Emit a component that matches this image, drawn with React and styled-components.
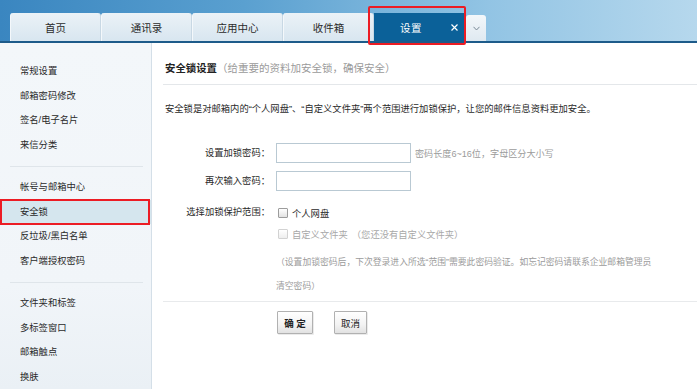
import React from "react";
import styled, { createGlobalStyle } from "styled-components";

const GlobalStyle = createGlobalStyle`
  html, body {
    margin: 0;
    padding: 0;
    background: #ffffff;
  }
  body {
    font-family: "Liberation Sans", "Noto Sans CJK SC", sans-serif;
    color: #333333;
  }
  * {
    box-sizing: border-box;
  }
`;

const Page = styled.div`
  width: 697px;
  height: 389px;
  overflow: hidden;
  display: flex;
  flex-direction: column;
  background: #ffffff;
`;

const Header = styled.div`
  height: 43px;
  flex-shrink: 0;
  display: flex;
  align-items: flex-end;
  padding-left: 10px;
  background: linear-gradient(90deg, #3a86c0 0%, #5aa0d0 35%, #92c4e4 70%, #b6d8ed 100%);
  border-bottom: 2px solid #1d5b8a;
  position: relative;
  z-index: 2;
`;

const Tab = styled.div`
  width: 91px;
  height: 28px;
  display: flex;
  align-items: center;
  justify-content: center;
  font-size: 10.5px;
  color: #2b2b2b;
  background: linear-gradient(180deg, #ebf2f7 0%, #d8e6f0 100%);
  border-right: 1px solid #c8d8e4;
  border-left: 1px solid #f4f8fb;
  border-radius: 3px 3px 0 0;
`;

const ActiveTab = styled.div`
  position: relative;
  width: 91px;
  height: 28px;
  display: flex;
  align-items: center;
  padding-left: 26px;
  font-size: 10.5px;
  color: #ffffff;
  background: #0b6199;
  margin-right: 1px;

  &::after {
    content: "";
    position: absolute;
    top: -7px;
    left: -6px;
    right: -1px;
    bottom: -4px;
    border: 2px solid #ec1c24;
    border-radius: 2px;
  }
`;

const TabLabel = styled.span`
  letter-spacing: 0.5px;
`;

const CloseMark = styled.svg`
  position: absolute;
  right: 7px;
  top: 11px;
`;

const MoreTab = styled.div`
  width: 20px;
  height: 26px;
  display: flex;
  align-items: center;
  justify-content: center;
  background: linear-gradient(180deg, #f3f7fa 0%, #dfe9f1 100%);
  border-radius: 3px 3px 0 0;
`;

const Body = styled.div`
  flex: 1;
  display: flex;
  min-height: 0;
`;

const Sidebar = styled.div`
  width: 152px;
  flex-shrink: 0;
  padding-top: 16px;
  border-right: 1px solid #d4dfe8;
  background: linear-gradient(180deg, #f3f7fa 0%, #f1f5f9 70%, #eaf0f5 100%);
`;

const NavGroup = styled.div`
  display: flex;
  flex-direction: column;
`;

const NavItem = styled.div`
  position: relative;
  height: 24.5px;
  line-height: 24.5px;
  padding-left: 20px;
  font-size: 9.3px;
  color: #2a2a2a;
  background: ${(p) => (p.$active ? "#d5e6ee" : "transparent")};

  ${(p) =>
    p.$active &&
    `
    &::after {
      content: "";
      position: absolute;
      top: -1px;
      left: 0;
      right: 1px;
      bottom: -1px;
      border: 2px solid #ec1c24;
    }
  `}
`;

const NavRule = styled.div`
  height: 1px;
  margin: 9px 8px 8px 10px;
  background: #dfe5ea;
`;

const Main = styled.div`
  flex: 1;
  padding-left: 11px;
  display: flex;
  flex-direction: column;
`;

const TitleRow = styled.div`
  padding: 18px 0 8px 2px;
  line-height: 14px;
  border-bottom: 1px solid #e4e7ea;
  display: flex;
  align-items: baseline;
`;

const Title = styled.span`
  font-size: 10.4px;
  font-weight: bold;
  color: #222222;
`;

const SubTitle = styled.span`
  font-size: 10.5px;
  color: #9a9a9a;
`;

const Description = styled.p`
  margin: 16px 0 0 2px;
  line-height: 16px;
  font-size: 9.3px;
  color: #2a2a2a;
`;

const Form = styled.div`
  margin-top: 26px;
  display: grid;
  grid-template-columns: 107px 1fr;
  column-gap: 6px;
  align-items: center;
`;

const Label = styled.div`
  text-align: right;
  font-size: 9.3px;
  color: #2a2a2a;
  line-height: ${(p) => p.$h || 20}px;
  margin-top: ${(p) => p.$mt || 0}px;
`;

const Field = styled.div`
  display: flex;
  align-items: center;
  gap: 4px;
  height: ${(p) => p.$h || 20}px;
  margin-top: ${(p) => p.$mt || 0}px;
`;

const Input = styled.input`
  width: 135px;
  height: 20px;
  border: 1px solid #b9c9d3;
  padding: 0 3px;
  font-size: 10px;
  outline: none;
  background: #ffffff;
`;

const Hint = styled.span`
  font-size: 9.1px;
  color: #9b9b9b;
`;

const Check = styled.span`
  width: 10px;
  height: 10px;
  margin-left: 2px;
  border: 1px solid ${(p) => (p.$disabled ? "#d2d2d2" : "#9c9c9c")};
  border-radius: 1px;
  background: linear-gradient(180deg, #ffffff 0%, ${(p) => (p.$disabled ? "#eeeeee" : "#e2e2e2")} 100%);
`;

const CheckText = styled.span`
  font-size: 9.3px;
  color: ${(p) => (p.$disabled ? "#a8a8a8" : "#2a2a2a")};
`;

const Muted = styled.span`
  font-size: 9.3px;
  color: #a8a8a8;
`;

const Note = styled.p`
  grid-column: 2;
  margin: 6px 0 0;
  font-size: 8.8px;
  line-height: 24px;
  color: #9b9b9b;
`;

const Rule = styled.div`
  height: 1px;
  margin-top: 3px;
  background: #e8eaec;
`;

const Actions = styled.div`
  margin-top: 9px;
  padding-left: 114px;
  display: flex;
  gap: 21px;
`;

const Button = styled.button`
  width: ${(p) => p.$w}px;
  height: 23px;
  padding: 0;
  font-family: inherit;
  font-size: 9.5px;
  font-weight: ${(p) => (p.$primary ? "bold" : "normal")};
  color: #222222;
  border: 1px solid #b1b1b1;
  border-radius: 1px;
  background: linear-gradient(180deg, #ffffff 0%, #f3f3f3 60%, #e2e2e2 100%);
  box-shadow: 1px 1px 0 rgba(0, 0, 0, 0.08);
`;

const tabs = ["首页", "通讯录", "应用中心", "收件箱"];

const navGroups = [
  ["常规设置", "邮箱密码修改", "签名/电子名片", "来信分类"],
  ["帐号与邮箱中心", "安全锁", "反垃圾/黑白名单", "客户端授权密码"],
  ["文件夹和标签", "多标签窗口", "邮箱触点", "换肤"],
];

const App = () => {
  return (
    <Page>
      <GlobalStyle />
      <Header>
        {tabs.map((t) => (
          <Tab key={t}>{t}</Tab>
        ))}
        <ActiveTab>
          <TabLabel>设置</TabLabel>
          <CloseMark width="7" height="7" viewBox="0 0 7 7">
            <path d="M0.5 0.5 L6.5 6.5 M6.5 0.5 L0.5 6.5" stroke="#ffffff" strokeWidth="1.2" />
          </CloseMark>
        </ActiveTab>
        <MoreTab>
          <svg width="7" height="5" viewBox="0 0 7 5">
            <path d="M0.5 0.8 L3.5 4 L6.5 0.8" fill="none" stroke="#7a8a96" strokeWidth="1" />
          </svg>
        </MoreTab>
      </Header>
      <Body>
        <Sidebar>
          {navGroups.map((group, gi) => (
            <React.Fragment key={gi}>
              {gi > 0 && <NavRule />}
              <NavGroup>
                {group.map((item) => (
                  <NavItem key={item} $active={item === "安全锁"}>
                    {item}
                  </NavItem>
                ))}
              </NavGroup>
            </React.Fragment>
          ))}
        </Sidebar>
        <Main>
          <TitleRow>
            <Title>安全锁设置</Title>
            <SubTitle>（给重要的资料加安全锁，确保安全）</SubTitle>
          </TitleRow>
          <Description>
            安全锁是对邮箱内的“个人网盘”、“自定义文件夹”两个范围进行加锁保护，让您的邮件信息资料更加安全。
          </Description>
          <Form>
            <Label>设置加锁密码：</Label>
            <Field>
              <Input type="password" />
              <Hint>密码长度6~16位，字母区分大小写</Hint>
            </Field>
            <Label $mt={8}>再次输入密码：</Label>
            <Field $mt={8}>
              <Input type="password" />
            </Field>
            <Label $mt={11} $h={21}>选择加锁保护范围：</Label>
            <Field $mt={11} $h={21}>
              <Check />
              <CheckText>个人网盘</CheckText>
            </Field>
            <div />
            <Field $h={21}>
              <Check $disabled />
              <CheckText $disabled>自定义文件夹</CheckText>
              <Muted>（您还没有自定义文件夹）</Muted>
            </Field>
            <Note>
              （设置加锁密码后，下次登录进入所选“范围”需要此密码验证。如忘记密码请联系企业邮箱管理员
              <br />
              清空密码）
            </Note>
          </Form>
          <Rule />
          <Actions>
            <Button $primary $w={36}>确 定</Button>
            <Button $w={33}>取消</Button>
          </Actions>
        </Main>
      </Body>
    </Page>
  );
};

export default App;
